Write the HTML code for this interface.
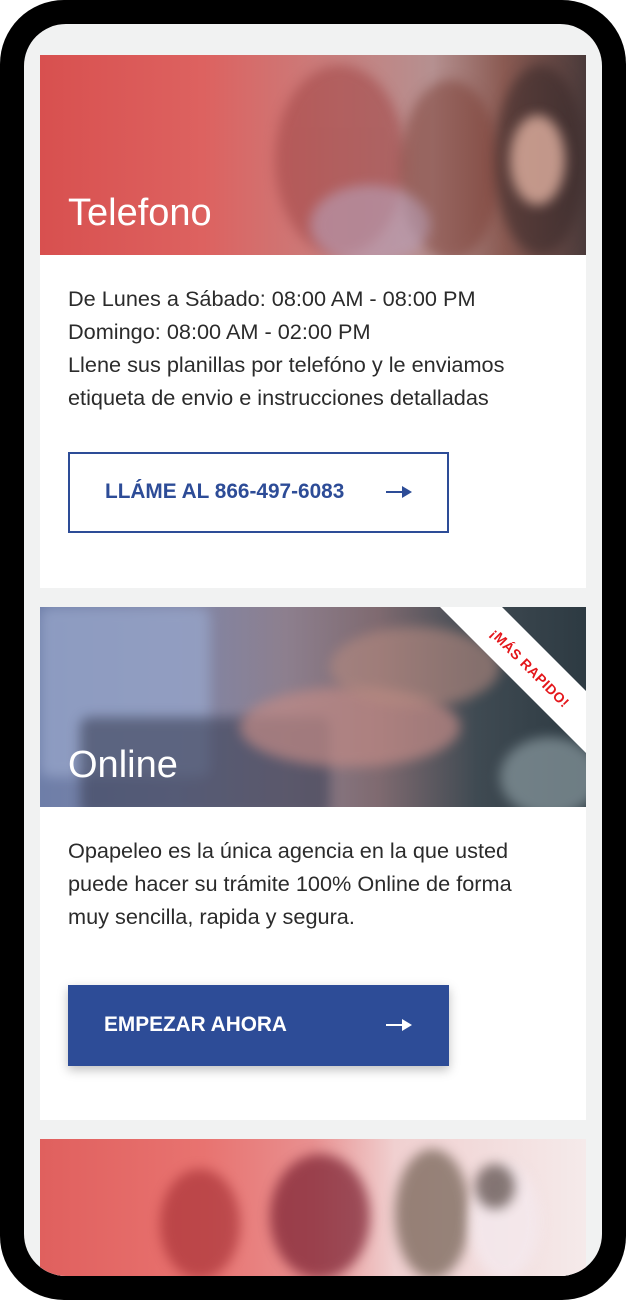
<!DOCTYPE html>
<html><head><meta charset="utf-8"><style>
*{margin:0;padding:0;box-sizing:border-box}
html,body{width:626px;height:1300px;background:#fff;overflow:hidden}
.phone{position:absolute;left:0;top:0;width:626px;height:1300px;background:#000;border-radius:64px}
.screen{position:absolute;left:24px;top:24px;width:578px;height:1252px;background:#f1f2f2;border-radius:42px;overflow:hidden}
.card{position:absolute;left:16px;width:546px;background:#fff}
.img{position:relative;height:200px;overflow:hidden}
.title{position:absolute;left:28px;bottom:20px;color:#fff;font:38px "Liberation Sans",sans-serif}
.txt{position:absolute;left:28px;font:21.7px/33px "Liberation Sans",sans-serif;color:#2b2b2b}
.btn{position:absolute;left:28px;width:381px;height:81px;font:bold 20.8px "Liberation Sans",sans-serif}
.btn span{position:absolute;left:36px;top:28px}
.arr{position:absolute;left:318px;top:39px;width:24px;height:2px}
.arr:after{content:"";position:absolute;right:-2px;top:-5px;border-left:10px solid;border-top:6px solid transparent;border-bottom:6px solid transparent;border-left-color:inherit}
.blob{position:absolute;border-radius:50%;filter:blur(6px)}
</style></head><body>
<div class="phone"></div>
<div class="screen">
 <div class="card" style="top:31px;height:533px">
  <div class="img" style="background:linear-gradient(90deg,#d8504f 0%,#dd6260 30%,#c7807f 55%,#b59090 72%,#8a5a52 85%,#4a3a3a 100%)">
   <div class="blob" style="left:235px;top:10px;width:130px;height:190px;background:#a04545;opacity:.55"></div>
   <div class="blob" style="left:360px;top:25px;width:100px;height:180px;background:#7b3d33;opacity:.5"></div>
   <div class="blob" style="left:455px;top:10px;width:90px;height:190px;background:#3a2a2a;opacity:.6"></div>
   <div class="blob" style="left:470px;top:60px;width:55px;height:90px;background:#e0b0a0;opacity:.8"></div>
   <div class="blob" style="left:270px;top:130px;width:120px;height:80px;background:#b8a0b8;opacity:.6"></div>
   <div class="title">Telefono</div>
  </div>
  <div class="txt" style="top:227px">De Lunes a Sábado: 08:00 AM - 08:00 PM<br>Domingo: 08:00 AM - 02:00 PM<br>Llene sus planillas por telefóno y le enviamos<br>etiqueta de envio e instrucciones detalladas</div>
  <div class="btn" style="top:397px;border:2px solid #2d4c97;color:#2d4c97"><span style="left:35px;top:26px">LLÁME AL 866-497-6083</span><div class="arr" style="background:#2d4c97;border-color:#2d4c97;top:37px;left:316px"></div></div>
 </div>
 <div class="card" style="top:583px;height:513px">
  <div class="img" style="background:linear-gradient(90deg,#6e7ea8 0%,#7f86a8 25%,#8d7f8e 45%,#7f6a70 62%,#3f4a52 80%,#2d3a42 100%)">
   <div class="blob" style="left:0;top:0;width:170px;height:170px;background:#9aa8cc;opacity:.7;border-radius:10px"></div>
   <div class="blob" style="left:40px;top:110px;width:250px;height:100px;background:#3a3f55;opacity:.6;border-radius:10px"></div>
   <div class="blob" style="left:200px;top:80px;width:220px;height:80px;background:#c08a86;opacity:.7"></div>
   <div class="blob" style="left:290px;top:20px;width:170px;height:80px;background:#b58a80;opacity:.6"></div>
   <div class="blob" style="left:460px;top:130px;width:100px;height:80px;background:#8a9aa0;opacity:.7"></div>
   <div style="position:absolute;left:0;top:0;width:546px;height:200px;background:#fff;clip-path:polygon(400px 0,462px 0,546px 84px,546px 146px)"></div>
   <div style="position:absolute;left:420px;top:53px;width:140px;text-align:center;transform:rotate(45deg);color:#e4161b;font:bold 14px 'Liberation Sans',sans-serif;letter-spacing:0.5px">¡MÁS RAPIDO!</div>
   <div class="title">Online</div>
  </div>
  <div class="txt" style="top:227px">Opapeleo es la única agencia en la que usted<br>puede hacer su trámite 100% Online de forma<br>muy sencilla, rapida y segura.</div>
  <div class="btn" style="top:378px;background:#2d4c97;color:#fff;box-shadow:0 4px 10px rgba(0,0,0,.25)"><span>EMPEZAR AHORA</span><div class="arr" style="background:#fff;border-color:#fff"></div></div>
 </div>
 <div class="card" style="top:1115px;height:140px">
  <div class="img" style="height:140px;background:linear-gradient(90deg,#e0605e 0%,#e87370 30%,#e89090 50%,#f0d0d0 65%,#f5eaea 100%)">
   <div class="blob" style="left:120px;top:30px;width:80px;height:110px;background:#a02a30;opacity:.6"></div>
   <div class="blob" style="left:230px;top:15px;width:100px;height:125px;background:#7a1f30;opacity:.7"></div>
   <div class="blob" style="left:355px;top:10px;width:75px;height:130px;background:#5a4a3a;opacity:.6"></div>
   <div class="blob" style="left:430px;top:25px;width:70px;height:115px;background:#f4e8ec;opacity:.9"></div>
   <div class="blob" style="left:435px;top:25px;width:40px;height:45px;background:#3a2a25;opacity:.6"></div>
  </div>
 </div>
</div>
</body></html>
